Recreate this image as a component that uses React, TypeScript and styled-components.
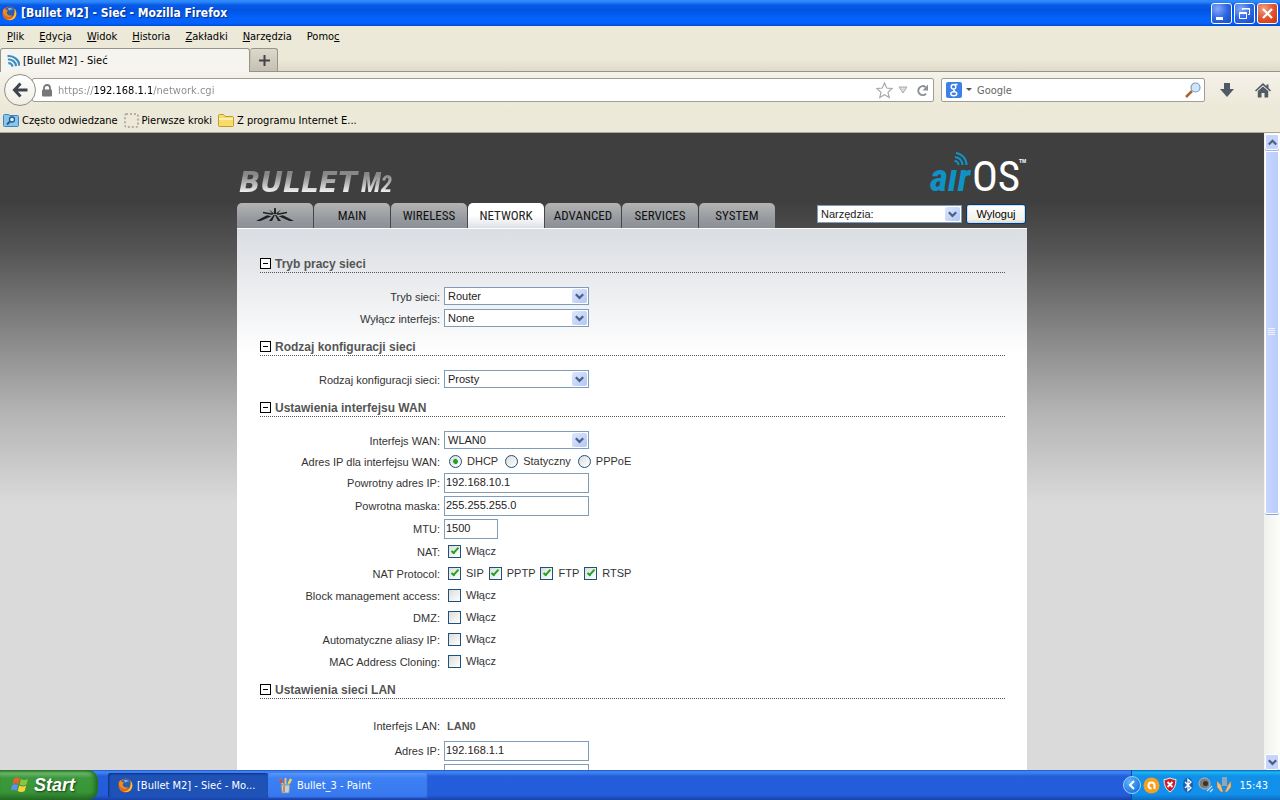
import React from "react";
import styled, { createGlobalStyle, css } from "styled-components";

const UI_FONT = '"DejaVu Sans Condensed", "DejaVu Sans", sans-serif';
const ARIAL = '"Liberation Sans", Arial, sans-serif';
const NARROW = '"Liberation Sans Narrow", "Roboto Condensed", "Liberation Sans", sans-serif';

const GlobalStyle = createGlobalStyle`
  *, *::before, *::after { box-sizing: border-box; }
  body { margin: 0; font-family: ${ARIAL}; font-size: 11px; color: #333; }
  button, input, select { font: inherit; color: inherit; margin: 0; }
`;

const Desktop = styled.div`
  display: flex;
  flex-direction: column;
  height: 100vh;
  overflow: hidden;
`;

/* ---------- window frame ---------- */

const TitleBar = styled.header`
  flex: none;
  display: flex;
  align-items: center;
  gap: 4px;
  height: 26px;
  padding: 0 2px;
  background: linear-gradient(#2f8cff 0, #2b86f8 2px, #0a5ae6 5px, #0054e3 10px, #0462fb 18px, #0463fc 23px, #0048d6 26px);
`;

const WindowTitle = styled.h1`
  flex: 1;
  margin: 0;
  font: bold 12px ${UI_FONT};
  color: #fff;
  text-shadow: 1px 1px 1px #0a2a80;
`;

const WindowButton = styled.button<{ $close?: boolean }>`
  width: 21px;
  height: 21px;
  margin-left: -2px;
  padding: 0;
  border: 1px solid #fff;
  border-radius: 3px;
  background: ${(p) =>
    p.$close
      ? "radial-gradient(circle at 30% 25%, #f0a083, #e25531 50%, #c8330e)"
      : "radial-gradient(circle at 30% 25%, #86a9f5, #2f68e4 50%, #1548c4)"};
  svg { display: block; }
`;

const MenuBar = styled.nav`
  flex: none;
  display: flex;
  align-items: center;
  gap: 15px;
  height: 22px;
  padding: 0 0 2px 7px;
  background: #ece9d8;
  font: 11px ${UI_FONT};
  color: #000;
`;

const MenuItem = styled.button`
  padding: 0;
  border: 0;
  background: none;
`;

const TabStrip = styled.div`
  flex: none;
  display: flex;
  height: 24px;
  border-bottom: 1px solid #96948a;
  background: linear-gradient(#ece9d8 50%, #dedbcb);
`;

const BrowserTab = styled.button`
  display: flex;
  align-items: center;
  gap: 3px;
  width: 250px;
  height: 24px;
  padding: 0 6px;
  border: 1px solid #96948a;
  border-bottom: 0;
  border-radius: 3px 3px 0 0;
  background: #f6f4ee;
  font: 11px ${UI_FONT};
  color: #000;
`;

const NewTab = styled.button`
  display: grid;
  place-items: center;
  width: 28px;
  height: 23px;
  padding: 0;
  border: 1px solid #96948a;
  border-left-color: #c4c1b4;
  border-bottom: 0;
  border-radius: 3px 3px 0 0;
  background: linear-gradient(#dcd9cb, #c4c1b4);
`;

const NavBar = styled.div`
  flex: none;
  display: flex;
  align-items: center;
  height: 36px;
  padding: 0 9px 0 4px;
  background: linear-gradient(#f4f2ea, #ece9d8);
`;

const BackButton = styled.button`
  z-index: 1;
  display: grid;
  place-items: center;
  width: 32px;
  height: 32px;
  padding: 0;
  border: 1px solid #8f8e86;
  border-radius: 50%;
  background: linear-gradient(#fff, #efede4);
`;

const Field = styled.div<{ $grow?: boolean }>`
  display: flex;
  align-items: center;
  height: 24px;
  border: 1px solid #a09e94;
  border-radius: 2px;
  background: #fff;
  ${(p) =>
    p.$grow
      ? css`flex: 1; margin-left: -4px; padding: 0 3px 0 8px; gap: 3px;`
      : css`width: 264px; margin-left: 7px; padding: 0 3px 0 4px; gap: 4px;`}
`;

const FieldInput = styled.input`
  flex: 1;
  min-width: 0;
  border: 0;
  outline: 0;
  padding: 0;
  background: none;
  font: 11px ${UI_FONT};
  color: #666;
`;

/* The host part of the address is darker than the scheme and the path. */
const AddressInput = styled(FieldInput)`
  padding-left: 2px;
  background: linear-gradient(90deg, #8a8a8a 38px, #000 38px, #000 96px, #8a8a8a 96px);
  background-clip: text;
  -webkit-text-fill-color: transparent;
`;

const ToolButton = styled.button`
  display: grid;
  place-items: center;
  width: 16px;
  height: 20px;
  padding: 0;
  border: 0;
  background: none;
`;

const ToolGroup = styled.div`
  display: flex;
  gap: 20px;
  padding-left: 14px;
`;

const BookmarkBar = styled.nav`
  flex: none;
  display: flex;
  align-items: center;
  gap: 6px;
  height: 25px;
  padding: 1px 3px 0;
  border-bottom: 1px solid #aca899;
  background: #ece9d8;
`;

const Bookmark = styled.a`
  display: flex;
  align-items: center;
  gap: 3px;
  font: 11px ${UI_FONT};
  color: #000;
  text-decoration: none;
`;

/* ---------- page viewport ---------- */

const Viewport = styled.div`
  flex: 1;
  min-height: 0;
  display: flex;
`;

const Page = styled.main`
  flex: 1;
  min-width: 0;
  overflow: hidden;
  background: #dadada linear-gradient(#3f3f3f 68px, #555 118px, #878787 202px, #b4b4b4 280px, #dadada 370px) no-repeat;
`;

const PageColumn = styled.div`
  width: 790px;
  margin: 0 auto;
`;

const PageHeader = styled.header`
  display: flex;
  justify-content: space-between;
  align-items: flex-end;
  height: 70px;
`;

const Product = styled.div`
  display: flex;
  align-items: baseline;
  gap: 4px;
  padding: 0 2px 3px;
  font: italic bold 28px/30px "DejaVu Sans", sans-serif;
  color: #ccc;
  background: linear-gradient(#888 20%, #b8b8b8 45%, #fff 75%);
  background-clip: text;
  -webkit-text-fill-color: transparent;
`;

const ProductModel = styled.span`
  font: italic bold 27px/30px ${NARROW};
  small { font-size: 23px; }
`;

const NavRow = styled.div`
  display: flex;
  align-items: flex-end;
  height: 25px;
`;

const TabList = styled.nav`
  flex: 1;
  display: flex;
  gap: 1px;
`;

const PageTab = styled.a<{ $active?: boolean }>`
  display: grid;
  place-items: center;
  width: 76px;
  height: 25px;
  border-radius: 5px 5px 0 0;
  background: ${(p) =>
    p.$active ? "linear-gradient(#fff 50%, #dfe1e6)" : "linear-gradient(#b4b4b4, #979ba0 60%, #8a8f95)"};
  font: 13px ${NARROW};
  color: ${(p) => (p.$active ? "#222" : "#111")};
  text-decoration: none;
`;

const Tools = styled.div`
  display: flex;
  align-items: center;
  gap: 4px;
  padding: 0 1px 4px 0;
`;

const LogoutButton = styled.button`
  width: 60px;
  height: 20px;
  padding: 0;
  border: 1px solid #003c74;
  border-radius: 3px;
  background: linear-gradient(#fff, #f2f1ea 80%, #dcd8cc);
  box-shadow: inset 0 0 0 1px #cfdcf0;
  color: #000;
`;

const Panel = styled.section`
  border-top: 1px solid #fff;
  padding: 17px 22px 0 23px;
  background: #fff linear-gradient(#dadde2, #fff 125px) no-repeat;
`;

/* ---------- form ---------- */

const SectionHead = styled.div`
  display: flex;
  align-items: flex-end;
  gap: 4px;
  height: 27px;
  margin-bottom: 12px;
  border-bottom: 1px dotted #555;
`;

const SectionTitle = styled.h2`
  margin: 0;
  font: bold 12px/16px ${ARIAL};
  color: #555;
`;

const Collapse = styled.button`
  display: grid;
  place-items: center;
  width: 11px;
  height: 11px;
  margin-bottom: 3px;
  padding: 0;
  border: 1px solid #000;
  background: #fff;
  &::after { content: ""; width: 5px; height: 1px; background: #000; }
`;

const Row = styled.div<{ $h: number }>`
  display: flex;
  align-items: center;
  gap: 4px;
  height: ${(p) => p.$h}px;
`;

const RowLabel = styled.span`
  width: 180px;
  padding-top: 1px;
  text-align: right;
`;

const LanName = styled.strong`
  padding: 1px 0 0 3px;
  color: #555;
`;

const SelectBox = styled.span`
  position: relative;
  display: flex;
  width: 145px;
  height: 18px;
`;

const NativeSelect = styled.select`
  appearance: none;
  width: 100%;
  padding: 0 20px 1px 3px;
  border: 1px solid #7f9db9;
  border-radius: 0;
  background: #fff;
  color: #222;
`;

const SelectArrow = styled.span`
  position: absolute;
  top: 2px;
  right: 2px;
  display: grid;
  place-items: center;
  width: 15px;
  height: 14px;
  border-radius: 2px;
  background: linear-gradient(135deg, #dde7fe, #b2c7f6);
  pointer-events: none;
`;

const TextInput = styled.input<{ $short?: boolean }>`
  width: ${(p) => (p.$short ? 54 : 145)}px;
  height: 20px;
  padding: 0 1px 1px;
  border: 1px solid #7f9db9;
  background: #fff;
  color: #222;
`;

const IndentedInput = styled(TextInput)`
  margin-left: 184px;
`;

const Options = styled.div<{ $wide?: boolean }>`
  display: flex;
  gap: ${(p) => (p.$wide ? 7 : 5)}px;
  padding-left: ${(p) => (p.$wide ? 5 : 4)}px;
`;

const Option = styled.label`
  display: flex;
  align-items: center;
  gap: 5px;
`;

const Tick = styled.input`
  appearance: none;
  display: grid;
  place-items: center;
  width: 13px;
  height: 13px;
  border: 1px solid #1c5180;
  background: linear-gradient(135deg, #dcdcd7, #fff);
  &:checked::after {
    content: "";
    width: 4px;
    height: 8px;
    margin-bottom: 2px;
    border: solid #21a121;
    border-width: 0 2px 2px 0;
    rotate: 42deg;
  }
`;

const Dot = styled(Tick)`
  border-radius: 50%;
  &:checked::after {
    width: 5px;
    height: 5px;
    margin: 0;
    border: 0;
    border-radius: 50%;
    background: #21a121;
  }
`;

/* ---------- scrollbar ---------- */

const ScrollTrack = styled.div`
  flex: none;
  display: flex;
  flex-direction: column;
  width: 16px;
  padding: 1px 1px 0;
  background: linear-gradient(90deg, #f0f0ec, #fdfdf9);
`;

const ScrollButton = styled.button`
  flex: none;
  display: grid;
  place-items: center;
  height: 16px;
  padding: 0;
  border: 1px solid #fff;
  border-radius: 2px;
  background: #c4d4fd;
  box-shadow: 0 1px 0 #9db4e8;
`;

const ScrollThumb = styled.div`
  flex: 0 0 57%;
  display: grid;
  place-items: center;
  margin-top: 1px;
  border: 1px solid #fff;
  border-radius: 2px;
  background: linear-gradient(90deg, #c9d5fe, #b9cdfb);
  box-shadow: 0 1px 0 #8aa5dc;
`;

const Spacer = styled.div`
  flex: 1;
`;

/* ---------- taskbar ---------- */

const Taskbar = styled.footer`
  flex: none;
  display: flex;
  align-items: stretch;
  height: 30px;
  background: linear-gradient(#1941a5 0, #3a80f3 1px, #3a82f0 3px, #245edb 6px, #245ddb 25px, #1941a5 30px);
`;

const StartButton = styled.button`
  display: flex;
  align-items: center;
  gap: 5px;
  width: 98px;
  margin-right: 10px;
  padding: 0 0 0 11px;
  border: 0;
  border-radius: 0 10px 10px 0;
  background: linear-gradient(#2f7a2f 0, #6cb86c 3px, #3c983c 8px, #379537 22px, #276b27 30px);
  box-shadow: inset -3px 0 4px #1f6a1f;
  font: italic bold 18px ${ARIAL};
  color: #fff;
  text-shadow: 1px 1px 2px #143d14;
`;

const TaskButton = styled.button<{ $active?: boolean }>`
  display: flex;
  align-items: center;
  gap: 4px;
  width: 160px;
  margin: 3px 0 2px;
  padding: 0 10px;
  border: 0;
  border-radius: 3px;
  background: ${(p) => (p.$active ? "#1e52b7" : "linear-gradient(#5a96fa, #3c81f3 5px, #3777ee)")};
  box-shadow: ${(p) => (p.$active ? "inset 1px 1px 2px #0f2f80" : "inset -1px -1px 1px #2a62cf")};
  font: 11px ${UI_FONT};
  color: #fff;
`;

const Tray = styled.div`
  display: flex;
  align-items: center;
  gap: 2px;
  padding: 0 12px 0 0;
  border-left: 1px solid #0a4ba8;
  background: linear-gradient(#0c59b9 0, #19b9f3 2px, #1290e8 6px, #1191ec 24px, #0d6cc0 30px);
  font: 11px ${UI_FONT};
  color: #fff;
`;

const TrayToggle = styled.button`
  display: grid;
  place-items: center;
  width: 18px;
  height: 18px;
  margin-left: -9px;
  padding: 0;
  border: 1px solid #9fd0ff;
  border-radius: 50%;
  background: radial-gradient(circle at 35% 30%, #5cb4ff, #0c5fd0);
`;

const Clock = styled.time`
  padding-left: 5px;
`;

/* ---------- drawings ---------- */

const Firefox = () => (
  <svg width="15" height="15" viewBox="0 0 16 16" aria-hidden="true">
    <circle cx="8" cy="8" r="7.500" fill="#e2661a" />
    <circle cx="8.600" cy="6.200" r="5.200" fill="#2a5fae" />
    <path d="M6 2.500c2-1 5-.5 6 1.500-2-.6-3 0-4 1z" fill="#7db7ea" />
    <path d="M.8 5C1.500 3 2 2.600 2.600 2c0 1 .6 1.600 2.200 1.900L6.500 5 5 6.500c0 3 3 4.500 6 3-1 2-4 3-6.500 1.500C2 9.500 1 7 .8 5z" fill="#f08a24" />
    <path d="M13.500 3c2 3 2.500 7 0 9.700-2 2.300-6 3-8.700 1.500 4 .5 7.500-1.500 8.300-5 .5-2 .6-4 .4-6.200z" fill="#fbc53a" />
  </svg>
);

const Rss = () => (
  <svg width="13" height="13" viewBox="0 0 13 13" fill="none" stroke="#3b8fc4" strokeWidth="2.200" aria-hidden="true">
    <path d="M1 1.500a11 11 0 0 1 11 11M1 5a7.500 7.500 0 0 1 7.500 7.500M1 8.700a3.800 3.800 0 0 1 3.800 3.800" transform="rotate(-6 6 6)" />
  </svg>
);

const Chevron = ({ up = false }: { up?: boolean }) => (
  <svg width="9" height="7" viewBox="0 0 9 7" fill="none" stroke="#4d6185" strokeWidth="2.200" aria-hidden="true">
    <path d={up ? "M.8 5.500 4.500 1.800 8.200 5.500" : "M.8 1.200 4.500 4.900 8.200 1.200"} />
  </svg>
);

const Folder = () => (
  <svg width="16" height="15" viewBox="0 0 16 15" aria-hidden="true">
    <path d="M.5 2.500q0-1 1-1h4l1.500 2h7.500q1 0 1 1v8q0 1-1 1h-13q-1 0-1-1z" fill="#f7dc6c" stroke="#c59b2b" />
    <path d="M1 5h14v2H1z" fill="#fdf2ae" />
  </svg>
);

const SmartFolder = () => (
  <svg width="16" height="15" viewBox="0 0 16 15" aria-hidden="true">
    <path d="M.5 2.500q0-1 1-1h4l1.500 1h7.500q1 0 1 1v9q0 1-1 1h-13q-1 0-1-1z" fill="#8cc3ea" stroke="#3a86bd" />
    <circle cx="9" cy="6.500" r="2.500" fill="#d9eefb" stroke="#1c5f94" strokeWidth="1.300" />
    <path d="m7 8.500-3 3" stroke="#1c5f94" strokeWidth="1.800" />
  </svg>
);

const BlankPage = () => (
  <svg width="15" height="15" viewBox="0 0 15 15" aria-hidden="true">
    <rect x="1" y="1" width="13" height="13" rx="1" fill="none" stroke="#777" strokeDasharray="2 2" />
  </svg>
);

const AntennaMark = () => (
  <svg width="38" height="15" viewBox="0 0 38 15" fill="#1f2022" aria-hidden="true">
    <path d="M0 13 11 7.200l4.500 1L4.500 13zM38 13 27 7.200l-4.500 1 11 4.800z" />
    <path d="m7 3.800 10 1.700-.5 1.500L7 5.300zM31 3.800 21 5.500l.5 1.500L31 5.300z" />
    <path d="m13 1.500 5 4-1.500.5zM25 1.500l-5 4 1.500.5zM18.200 0h1.600l.4 6h-2.400z" />
    <path d="m18 6.500-5 6.500h3l3-6zM20 6.500l5 6.500h-3l-3-6z" />
  </svg>
);

const LogoArt = styled.svg`
  overflow: visible;
  margin-bottom: 4px;
`;

const AirOs = () => (
  <LogoArt width="97" height="52" viewBox="0 0 97 52" role="img" aria-label="airOS">
    <text x="0" y="44" fontFamily={NARROW} fontSize="39" fontStyle="italic" fontWeight="bold" fill="#0f93c4">aır</text>
    <g fill="none" stroke="#0f93c4" strokeWidth="2">
      <path d="M26 6a12 12 0 0 1 10.500 12" />
      <path d="M25 10a8 8 0 0 1 7.500 8" />
      <path d="M24.500 14a4 4 0 0 1 4 4" />
    </g>
    <text x="42" y="44" fontFamily={NARROW} fontSize="43" fill="#fff">OS</text>
    <text x="89" y="16" fontFamily={ARIAL} fontSize="5" fontWeight="bold" fill="#fff">TM</text>
  </LogoArt>
);

/* ---------- form parts ---------- */

const Select = ({ id, label, value }: { id: string; label?: string; value: string }) => (
  <SelectBox>
    <NativeSelect id={id} aria-label={label} defaultValue={value}>
      <option>{value}</option>
    </NativeSelect>
    <SelectArrow><Chevron /></SelectArrow>
  </SelectBox>
);

const SelectRow = ({ id, label, value }: { id: string; label: string; value: string }) => (
  <Row $h={22}>
    <RowLabel as="label" htmlFor={id}>{label}:</RowLabel>
    <Select id={id} value={value} />
  </Row>
);

const TextRow = ({ id, label, value, short }: { id: string; label: string; value: string; short?: boolean }) => (
  <Row $h={23}>
    <RowLabel as="label" htmlFor={id}>{label}:</RowLabel>
    <TextInput id={id} $short={short} defaultValue={value} />
  </Row>
);

const TickRow = ({ label, options, on }: { label: string; options: string[]; on?: boolean }) => (
  <Row $h={22} role="group" aria-label={label}>
    <RowLabel>{label}:</RowLabel>
    <Options>
      {options.map((o) => (
        <Option key={o}>
          <Tick type="checkbox" defaultChecked={on} />
          {o}
        </Option>
      ))}
    </Options>
  </Row>
);

const Heading = ({ children }: { children: string }) => (
  <SectionHead>
    <Collapse type="button" aria-label={`Zwiń: ${children}`} />
    <SectionTitle>{children}</SectionTitle>
  </SectionHead>
);

const menus: [string, string, string][] = [
  ["", "P", "lik"], ["", "E", "dycja"], ["", "W", "idok"], ["", "H", "istoria"],
  ["", "Z", "akładki"], ["", "N", "arzędzia"], ["Pomo", "c", ""],
];
const pages = ["MAIN", "WIRELESS", "NETWORK", "ADVANCED", "SERVICES", "SYSTEM"];

export default function App() {
  return (
    <Desktop>
      <GlobalStyle />
      <TitleBar>
        <Firefox />
        <WindowTitle>[Bullet M2] - Sieć - Mozilla Firefox</WindowTitle>
        <WindowButton aria-label="Minimalizuj">
          <svg width="19" height="19"><path d="M4 13h7v3H4z" fill="#fff" /></svg>
        </WindowButton>
        <WindowButton aria-label="Przywróć">
          <svg width="19" height="19" fill="none" stroke="#fff"><path d="M7.500 6V4.500h7v6H13M7 5h8M4.500 8.500h7v6h-7zM4 9.500h8" /></svg>
        </WindowButton>
        <WindowButton $close aria-label="Zamknij">
          <svg width="19" height="19" stroke="#fff" strokeWidth="2.200"><path d="m5 5 9 9M14 5l-9 9" /></svg>
        </WindowButton>
      </TitleBar>

      <MenuBar>
        {menus.map(([a, key, b]) => (
          <MenuItem key={a + key + b}>{a}<u>{key}</u>{b}</MenuItem>
        ))}
      </MenuBar>

      <TabStrip>
        <BrowserTab><Rss />[Bullet M2] - Sieć</BrowserTab>
        <NewTab aria-label="Nowa karta">
          <svg width="11" height="11" stroke="#444" strokeWidth="2"><path d="M5.500 0v11M0 5.500h11" /></svg>
        </NewTab>
      </TabStrip>

      <NavBar>
        <BackButton aria-label="Wstecz">
          <svg width="16" height="16" fill="none" stroke="#3d4450" strokeWidth="3"><path d="M8.500 1.500 2.500 8l6 6.500M3 8h12.500" /></svg>
        </BackButton>
        <Field $grow>
          <svg width="12" height="13" viewBox="0 0 12 13" aria-hidden="true">
            <path d="M3 6V4a3 3 0 0 1 6 0v2" fill="none" stroke="#777" strokeWidth="1.800" />
            <rect x="1" y="5.500" width="10" height="7" rx="1" fill="#777" />
          </svg>
          <AddressInput aria-label="Adres" defaultValue="https://192.168.1.1/network.cgi" />
          <ToolButton aria-label="Dodaj zakładkę">
            <svg width="17" height="17" viewBox="0 0 17 17" fill="#fff" stroke="#aaa" strokeWidth="1.200"><path d="m8.500 1 2.200 5 5.300.6-4 3.600 1.200 5.300-4.700-2.800-4.700 2.800L5 10.200 1 6.600 6.300 6z" /></svg>
          </ToolButton>
          <ToolButton aria-label="Historia adresów">
            <svg width="10" height="8"><path d="M1 1h8L5 7z" fill="#ddd" stroke="#aaa" /></svg>
          </ToolButton>
          <ToolButton aria-label="Odśwież">
            <svg width="13" height="13" viewBox="0 0 13 13"><path d="M10 9.800A4.500 4.500 0 1 1 9.500 3" fill="none" stroke="#8a8f98" strokeWidth="2" /><path d="M12 .5v6H6.500z" fill="#8a8f98" /></svg>
          </ToolButton>
        </Field>
        <Field>
          <svg width="16" height="16" viewBox="0 0 16 16" aria-hidden="true">
            <rect width="16" height="16" rx="2" fill="#3f7fe8" />
            <g fill="none" stroke="#fff" strokeWidth="1.400"><circle cx="7.500" cy="4.800" r="2.300" /><ellipse cx="7.800" cy="11.700" rx="3" ry="2" /><path d="M8 7c-1 1 0 1.500 1 2.500M9 2.500h2.500" /></g>
          </svg>
          <svg width="7" height="4" aria-hidden="true"><path d="M0 0h6L3 3z" fill="#555" /></svg>
          <FieldInput aria-label="Szukaj" defaultValue="Google" />
          <ToolButton aria-label="Szukaj w Google">
            <svg width="16" height="16"><path d="m7 9-6 6" stroke="#a8672e" strokeWidth="2.500" /><circle cx="10.500" cy="5.500" r="4.500" fill="#cfe6f9" stroke="#7a9cc0" strokeWidth="1.200" /></svg>
          </ToolButton>
        </Field>
        <ToolGroup>
          <ToolButton aria-label="Pobrane pliki">
            <svg width="14" height="15" fill="#525a66"><path d="M4 0h6v6h4L7 14 0 6h4z" /></svg>
          </ToolButton>
          <ToolButton aria-label="Strona startowa">
            <svg width="16" height="15" viewBox="0 0 16 15" fill="#525a66"><path d="M8 0 0 7.500l1 1L8 2.200l7 6.300 1-1-2.500-2.400V1.500h-2v1.700z" /><path d="M8 3.500 2.800 8v6.500h3.700V10h3v4.500h3.700V8z" /></svg>
          </ToolButton>
        </ToolGroup>
      </NavBar>

      <BookmarkBar>
        <Bookmark href="#often"><SmartFolder />Często odwiedzane</Bookmark>
        <Bookmark href="#start"><BlankPage />Pierwsze kroki</Bookmark>
        <Bookmark href="#ie"><Folder />Z programu Internet E...</Bookmark>
      </BookmarkBar>

      <Viewport>
        <Page>
          <PageColumn>
            <PageHeader>
              <Product>BULLET <ProductModel>M<small>2</small></ProductModel></Product>
              <AirOs />
            </PageHeader>
            <NavRow>
              <TabList>
                <PageTab href="#ubnt" aria-label="Ubiquiti"><AntennaMark /></PageTab>
                {pages.map((p) => (
                  <PageTab key={p} href={`#${p.toLowerCase()}`} $active={p === "NETWORK"}>{p}</PageTab>
                ))}
              </TabList>
              <Tools>
                <Select id="tools" label="Narzędzia" value="Narzędzia:" />
                <LogoutButton>Wyloguj</LogoutButton>
              </Tools>
            </NavRow>

            <Panel>
              <Heading>Tryb pracy sieci</Heading>
              <SelectRow id="mode" label="Tryb sieci" value="Router" />
              <SelectRow id="disable" label="Wyłącz interfejs" value="None" />

              <Heading>Rodzaj konfiguracji sieci</Heading>
              <SelectRow id="config" label="Rodzaj konfiguracji sieci" value="Prosty" />

              <Heading>Ustawienia interfejsu WAN</Heading>
              <SelectRow id="wan" label="Interfejs WAN" value="WLAN0" />
              <Row $h={20} role="radiogroup" aria-label="Adres IP dla interfejsu WAN">
                <RowLabel>Adres IP dla interfejsu WAN:</RowLabel>
                <Options $wide>
                  {["DHCP", "Statyczny", "PPPoE"].map((o) => (
                    <Option key={o}>
                      <Dot type="radio" name="wan-ip" defaultChecked={o === "DHCP"} />
                      {o}
                    </Option>
                  ))}
                </Options>
              </Row>
              <TextRow id="fallback-ip" label="Powrotny adres IP" value="192.168.10.1" />
              <TextRow id="fallback-mask" label="Powrotna maska" value="255.255.255.0" />
              <TextRow id="mtu" label="MTU" value="1500" short />
              <TickRow label="NAT" options={["Włącz"]} on />
              <TickRow label="NAT Protocol" options={["SIP", "PPTP", "FTP", "RTSP"]} on />
              <TickRow label="Block management access" options={["Włącz"]} />
              <TickRow label="DMZ" options={["Włącz"]} />
              <TickRow label="Automatyczne aliasy IP" options={["Włącz"]} />
              <TickRow label="MAC Address Cloning" options={["Włącz"]} />

              <Heading>Ustawienia sieci LAN</Heading>
              <Row $h={28}>
                <RowLabel>Interfejs LAN:</RowLabel>
                <LanName>LAN0</LanName>
              </Row>
              <TextRow id="lan-ip" label="Adres IP" value="192.168.1.1" />
              <Row $h={23}>
                <IndentedInput aria-label="Maska" />
              </Row>
            </Panel>
          </PageColumn>
        </Page>
        <ScrollTrack>
          <ScrollButton aria-label="W górę"><Chevron up /></ScrollButton>
          <ScrollThumb>
            <svg width="8" height="8" stroke="#eef4fe"><path d="M0 .5h7M0 2.500h7M0 4.500h7M0 6.500h7" /></svg>
          </ScrollThumb>
          <Spacer />
          <ScrollButton aria-label="W dół"><Chevron /></ScrollButton>
        </ScrollTrack>
      </Viewport>

      <Taskbar>
        <StartButton>
          <svg width="18" height="18" viewBox="0 0 18 18" aria-hidden="true">
            <path d="M3 2.500q3-2 6 0L7.500 8Q4.500 6.500 1.500 8z" fill="#e8602c" />
            <path d="M10 3q3 2 7 0l-1.500 5.500q-3.500 2-7 0z" fill="#8cc63e" />
            <path d="M1.200 9q3-1.500 6 0L5.700 14.500q-3-1.500-6 0z" fill="#5c92ea" />
            <path d="M8.200 9.500q3.500 2 7 0l-1.500 5.500q-3.500 2-7 0z" fill="#fbd23c" />
          </svg>
          Start
        </StartButton>
        <TaskButton $active><Firefox />[Bullet M2] - Sieć - Mo...</TaskButton>
        <TaskButton>
          <svg width="15" height="16" viewBox="0 0 15 16" aria-hidden="true">
            <path d="m2 1 4 8M13 1 9 9M7.500 0v9" stroke="#e8c07a" strokeWidth="2" />
            <path d="m2 1 2 4" stroke="#d94a3a" strokeWidth="2.500" /><path d="m13 1-2 4" stroke="#f2d24a" strokeWidth="2.500" />
            <path d="M3 7h9l-1 8H4z" fill="#b9d3e8" stroke="#7d8ea0" /><path d="M6 8v6" stroke="#d9873a" strokeWidth="2" />
          </svg>
          Bullet_3 - Paint
        </TaskButton>
        <Spacer />
        <Tray>
          <TrayToggle aria-label="Pokaż ukryte ikony">
            <svg width="8" height="10" fill="none" stroke="#fff" strokeWidth="2"><path d="M6 1 2 5l4 4" /></svg>
          </TrayToggle>
          <svg width="17" height="17" viewBox="0 0 17 17"><circle cx="8.500" cy="8.500" r="8" fill="#f6a01e" /><path d="M11.500 12V8.500a3 3 0 1 0-3 3" fill="none" stroke="#fff" strokeWidth="2" /></svg>
          <svg width="16" height="16" viewBox="0 0 16 16"><path d="M8 1q3 1.500 6 1.500 0 9-6 12.500Q2 11.500 2 2.500 5 2.500 8 1z" fill="#c8202c" stroke="#eee" /><path d="m5.500 5 5 5M10.500 5l-5 5" stroke="#fff" strokeWidth="1.800" /></svg>
          <svg width="16" height="16" viewBox="0 0 16 16"><ellipse cx="8" cy="8" rx="5" ry="7.500" fill="#1a5fb4" /><path d="m5 5 6 6-3 2.500v-11L11 5l-6 6" fill="none" stroke="#fff" strokeWidth="1.300" /></svg>
          <svg width="16" height="16" viewBox="0 0 16 16"><circle cx="6.500" cy="6.500" r="5.500" fill="#7b7b7b" stroke="#bbb" /><circle cx="7.500" cy="6.500" r="2.500" fill="#333" /><path d="m9 14 5-5M12 15l3-3" stroke="#cde" strokeWidth="1.200" /></svg>
          <svg width="16" height="16" viewBox="0 0 16 16"><path d="M6 0h5v9H6z" fill="#8fa6bd" /><path d="m1 4 4 4 2 7H5L1 10zM15 4l-3 4-3 7h2l4-5z" fill="#efbd7c" stroke="#a8763a" strokeWidth=".5" /></svg>
          <Clock>15:43</Clock>
        </Tray>
      </Taskbar>
    </Desktop>
  );
}
